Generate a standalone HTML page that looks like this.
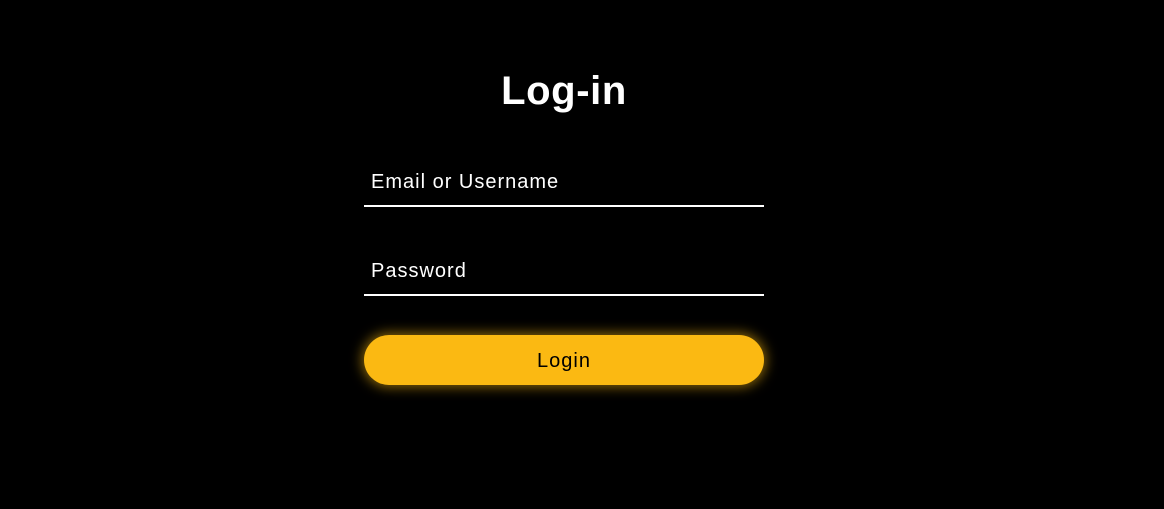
<!DOCTYPE html>
<html><head><meta charset="utf-8"><style>
html,body{margin:0;padding:0;background:#000;width:1164px;height:509px;overflow:hidden;font-family:"Liberation Sans",sans-serif;}
h1{position:absolute;left:364px;width:400px;top:67px;margin:0;text-align:center;color:#fff;font-size:40px;font-weight:bold;line-height:48px;letter-spacing:0.6px}
.f{position:absolute;left:364px;width:400px;border-bottom:2px solid #fff;color:#fff;font-size:20px;letter-spacing:1px}
.f span{position:absolute;left:7px;}
.btn{position:absolute;left:364px;top:335px;width:400px;height:50px;border-radius:25px;background:#fbb912;box-shadow:0 0 12px 2px rgba(251,185,18,0.55);color:#000;font-size:20px;letter-spacing:1px;text-align:center;line-height:52px}
</style></head><body>
<h1>Log-in</h1>
<div class="f" style="top:160px;height:45px"><span style="top:11px">Email or Username</span></div>
<div class="f" style="top:249px;height:45px"><span style="top:11px">Password</span></div>
<div class="btn">Login</div>
</body></html>
